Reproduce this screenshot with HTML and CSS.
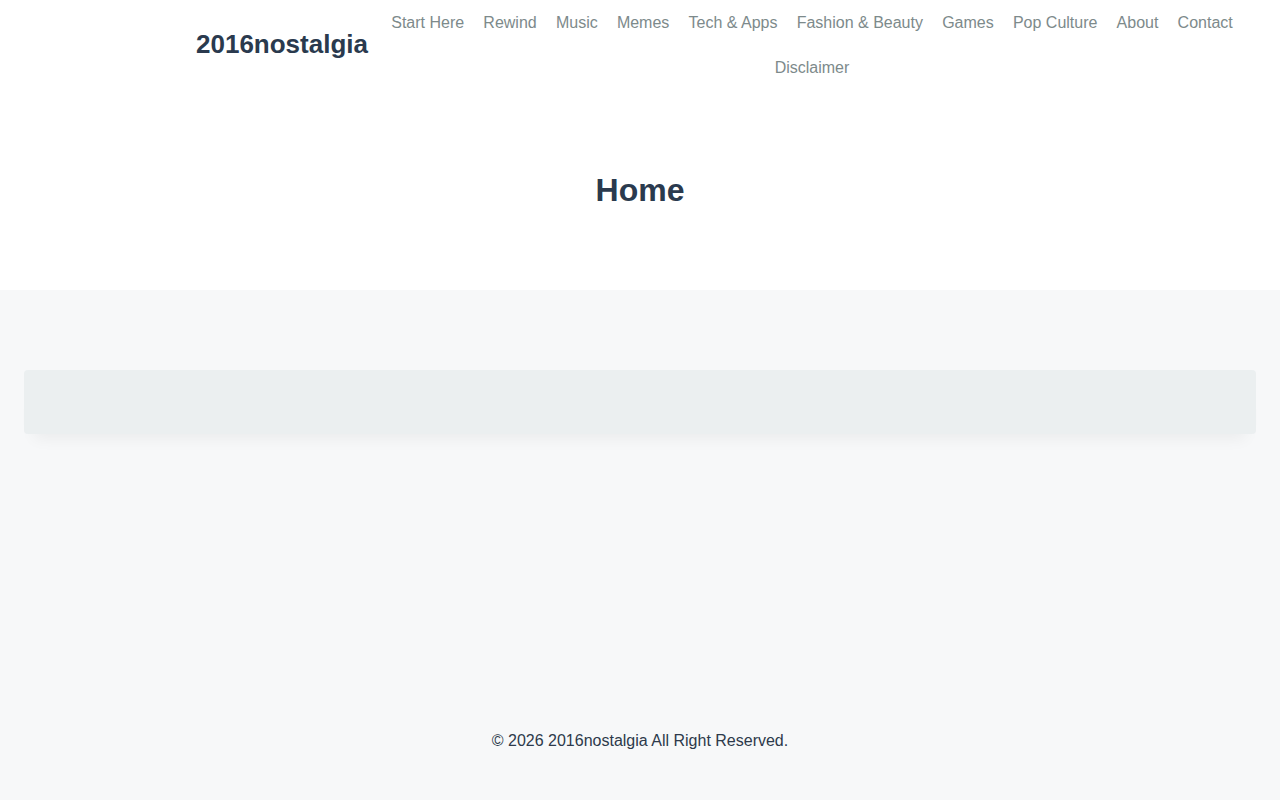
FILE: index.html
```html
<!DOCTYPE html>
<html lang="en">
<head>
<meta charset="utf-8">
<title>Home - 2016nostalgia</title>
<link rel="stylesheet" href="styles.css">
</head>
<body>
<header class="site-header">
  <div class="header-inner">
    <a class="logo" href="#">2016nostalgia</a>
    <nav class="main-nav">
      <a href="#">Start Here</a>
      <a href="#">Rewind</a>
      <a href="#">Music</a>
      <a href="#">Memes</a>
      <a href="#">Tech &amp; Apps</a>
      <a href="#">Fashion &amp; Beauty</a>
      <a href="#">Games</a>
      <a href="#">Pop Culture</a>
      <a href="#">About</a>
      <a href="#">Contact</a>
      <a href="#">Disclaimer</a>
    </nav>
  </div>
</header>
<section class="page-hero">
  <h1 class="page-title">Home</h1>
</section>
<main class="content-area">
  <div class="content-card"></div>
</main>
<footer class="site-footer">
  <p>© 2026 2016nostalgia All Right Reserved.</p>
</footer>
</body>
</html>
```
FILE: styles.css
```css
* { box-sizing: border-box; }
html, body { margin: 0; padding: 0; }
body {
  font-family: "Liberation Sans", Arial, sans-serif;
  font-size: 16px;
  line-height: 1.5;
  color: #2d3a4b;
  background: #f7f8f9;
}
a { text-decoration: none; }

.site-header { background: #fff; }
.header-inner {
  display: flex;
  align-items: center;
  padding: 0 37px 0 196px;
  gap: 13px;
  height: 90px;
}
.logo {
  font-size: 26px;
  font-weight: 700;
  color: #2a3a4e;
  line-height: 1.2;
  white-space: nowrap;
  flex: 0 0 auto;
}
.main-nav {
  flex: 1 1 auto;
  display: flex;
  flex-wrap: wrap;
  justify-content: center;
}
.main-nav a {
  color: #7d8a8b;
  padding: 10.5px 9.6px;
  line-height: 24px;
  white-space: nowrap;
}

.page-hero {
  background: #fff;
  height: 200px;
  display: flex;
  justify-content: center;
  padding-top: 78px;
}
.page-title {
  margin: 0;
  font-size: 32px;
  font-weight: 700;
  line-height: 1.4;
  color: #2a3a4e;
}

.content-area {
  padding: 80px 24px 0;
  height: 410px;
}
.content-card {
  height: 64px;
  background: #ebeff0;
  border-radius: 4px;
  box-shadow: 0 15px 15px -10px rgba(0, 0, 0, 0.05);
}

.site-footer {
  text-align: center;
  padding: 29px 0 0;
  height: 100px;
}
.site-footer p {
  margin: 0;
  color: #2d3a4b;
}
```
